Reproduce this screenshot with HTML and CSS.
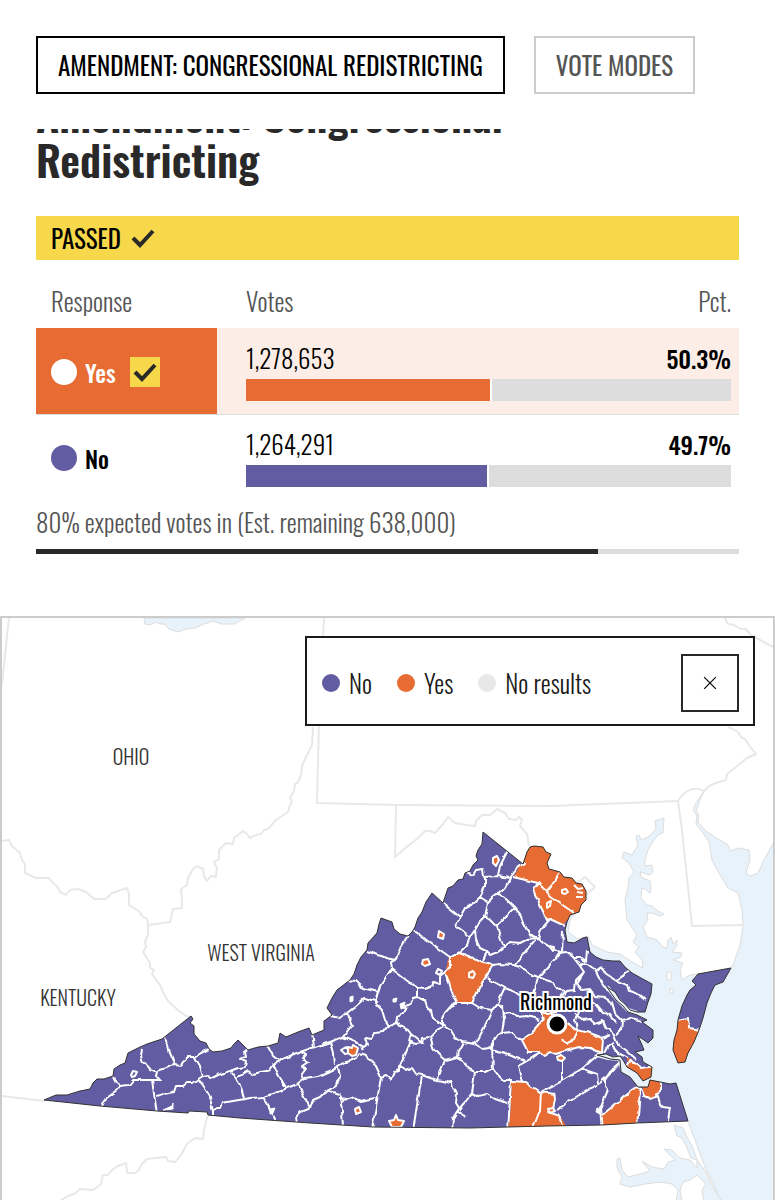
FILE: index.html
```html
<!DOCTYPE html>
<html lang="en">
<head>
  <meta charset="UTF-8">
  <meta name="viewport" content="width=device-width, initial-scale=1">
  <title>Amendment: Congressional Redistricting</title>
  <link rel="stylesheet" href="styles.css">
</head>
<body>
  <nav class="tabs">
    <button type="button" class="tab active">AMENDMENT: CONGRESSIONAL REDISTRICTING</button>
    <button type="button" class="tab">VOTE MODES</button>
  </nav>

  <main>
    <section class="results">
      <div class="title-wrap">
        <h1>Amendment: Congressional<br>Redistricting</h1>
      </div>

      <p class="passed">PASSED
        <svg class="check" viewBox="0 0 24 20"><path d="M2 10l7 7L22 3"/></svg>
      </p>

      <table>
        <thead>
          <tr>
            <th class="response">Response</th>
            <th>Votes</th>
            <th class="pct">Pct.</th>
          </tr>
        </thead>
        <tbody class="winner">
          <tr>
            <th rowspan="2" class="response">
              <div class="choice">
                <span class="dot"></span>Yes
                <span class="badge"><svg class="check" viewBox="0 0 24 20"><path d="M2 10l7 7L22 3"/></svg></span>
              </div>
            </th>
            <td>1,278,653</td>
            <td class="pct">50.3%</td>
          </tr>
          <tr>
            <td colspan="2" class="bar-cell"><div class="bar"><div class="fill yes" style="width: 50.3%"></div></div></td>
          </tr>
        </tbody>
        <tbody>
          <tr>
            <th rowspan="2" class="response">
              <div class="choice"><span class="dot no"></span>No</div>
            </th>
            <td>1,264,291</td>
            <td class="pct">49.7%</td>
          </tr>
          <tr>
            <td colspan="2" class="bar-cell"><div class="bar"><div class="fill no" style="width: 49.7%"></div></div></td>
          </tr>
        </tbody>
      </table>

      <p class="expected">80% expected votes in (Est. remaining 638,000)</p>
      <div class="progress"><div class="progress-fill" style="width: 80%"></div></div>
    </section>

    <section class="map">
      <svg class="map-svg" viewBox="2 618 771 582">
        <defs>
          <path id="virginia" d="M44 1100L56 1095 67 1095 80 1091 90 1089 93 1083 97 1079 104 1079 113 1076 114 1069 120 1065 125 1063 128 1053 138 1048 147 1044 162 1039 191 1016 193 1019 190 1023 194 1026 194 1034 200 1041 206 1043 209 1049 213 1052 222 1051 231 1048 234 1044 238 1040 243 1045 248 1050 258 1047 268 1046 278 1043 280 1033 286 1037 298 1032 309 1028 312 1035 324 1030 324 1021 332 1015 327 1008 332 998 337 990 350 980 354 974 357 965 361 957 367 950 368 943 377 933 379 924 381 918 392 922 394 929 400 934 408 936 412 932 415 927 418 918 422 912 426 902 432 893 443 903 448 888 453 886 458 880 463 879 465 873 470 871 473 865 478 860 476 856 478 850 482 844 483 832 523 864 527 852 530 847 534 846 543 847 546 852 551 854 547 863 549 869 560 872 564 877 572 878 576 883 582 884 586 891 586 900 581 905 579 912 570 915 567 922 565 930 567 942 574 943 583 938 587 937 590 952 596 957 603 960 613 961 620 961 625 967 632 973 641 978 652 984 651 994 648 1002 645 1012 637 1012 630 1010 625 1004 620 1000 615 992 607 987 611 993 616 1000 623 1006 628 1012 637 1015 647 1020 642 1022 653 1030 653 1038 648 1043 644 1040 638 1036 642 1045 644 1050 635 1052 642 1057 643 1062 652 1067 651 1077 643 1081 637 1073 627 1067 623 1060 620 1056 613 1057 606 1054 597 1055 604 1057 610 1059 620 1060 621 1072 630 1077 638 1087 648 1087 650 1080 660 1082 670 1084 676 1083 688 1121 637 1123 602 1125 547 1126 470 1128 373 1127 310 1123 240 1118 208 1115 207 1112 189 1111 188 1113 157 1111 100 1106Z"/>
          <path id="shore" d="M698 974L731 968 723 982 715 985 711 993 707 1003 703 1018 699 1030 694 1042 688 1053 685 1062 678 1063 673 1050 674 1040 677 1030 678 1020 682 1006 687 995 690 990 696 985 692 981Z"/>
          <clipPath id="state"><use href="#virginia"/><use href="#shore"/></clipPath>
          <!-- roughens the county lines so they run like rivers -->
          <filter id="rough" filterUnits="userSpaceOnUse" x="2" y="800" width="771" height="400" color-interpolation-filters="sRGB">
            <feTurbulence type="fractalNoise" baseFrequency="0.14" numOctaves="1" seed="4"/>
            <feDisplacementMap in="SourceGraphic" scale="5" xChannelSelector="R" yChannelSelector="G"/>
          </filter>
        </defs>

        <!-- water -->
        <g class="water">
          <path d="M144 618L145 624 150 625 156 622 160 624 164 624 169 629 178 632 186 629 195 628 204 624 213 621 221 624 234 624 245 618Z"/>
          <path d="M664 818L663 833 658 835 652 843 648 850 645 860 645 866 652 865 653 872 650 875 640 872 641 877 650 881 651 890 650 893 645 889 642 888 641 898 647 905 652 906 658 911 664 914 660 916 652 913 647 913 648 920 643 927 647 937 657 940 663 947 667 948 668 940 671 937 673 944 677 940 677 946 672 952 682 953 681 957 673 960 683 963 680 970 682 980 690 975 698 974 731 968 733 965 740 945 743 927 742 910 738 893 728 888 720 875 712 860 709 842 703 833 696 824 697 816 693 810 696 803 704 791 700 800 696 811 699 815 698 822 705 830 716 838 727 844 731 851 738 848 749 850 750 860 746 873 750 876 758 873 765 858 775 840 775 1202 721 1202 715 1187 705 1167 695 1140 688 1121 640 1100 600 1050 580 960 563 935 565 920 578 911 570 920 568 932 578 939 588 936 592 945 607 952 620 954 632 962 643 968 642 960 635 952 639 947 633 942 637 935 627 920 625 900 628 888 629 878 634 872 629 863 622 858 624 852 632 855 638 845 636 836 639 835 641 840 648 837 656 829 655 821Z"/>
          <path d="M674 1125L683 1128 686 1135 693 1148 697 1160 706 1172 712 1185 722 1202 704 1202 702 1190 706 1184 697 1175 690 1180 683 1182 680 1190 682 1202 676 1202 678 1190 672 1184 660 1182 645 1184 630 1187 620 1184 622 1177 617 1168 617 1159 620 1158 622 1170 628 1177 640 1174 650 1171 642 1161 652 1167 664 1169 668 1162 675 1160 664 1149 672 1150 680 1158 690 1160 697 1168 697 1160 691 1158 687 1148 682 1138 677 1136Z"/>
        </g>
        <path class="islet" d="M667 972h4v8h-4zM670 989h3v4h-3z"/>

        <!-- neighbouring states -->
        <g class="borders">
          <path d="M9 617L2 684"/>
          <path d="M2 841L9 840 12 846 20 853 22 860 25 864 25 873 36 878 49 878 52 882 57 886 60 892 66 895 70 890 78 889 86 892 94 899 106 899 112 893 118 891 127 888 129 894 129 905 140 912 142 916 147 919 148 925 148 935 145 942 146 947 143 952 150 963 150 968 154 970 152 974 160 985 164 994 168 1001 178 1010 186 1016 191 1017"/>
          <path d="M148 925L170 922 173 909 182 908 182 900 181 889 187 885 188 878 193 869 197 866 203 869 204 876 207 881 211 876 216 877 217 868 214 862 219 859 219 850 226 843 233 844 234 838 243 831 247 834 250 838 256 835 261 834 264 830 268 829 276 820 288 812 290 805 292 802 290 798 294 791 295 784 298 782 301 775 302 766 306 757 312 745 313 727"/>
          <path d="M324 617L323 640M319 720L317 803 400 805 550 806 678 801C685 789 696 786 704 791L709 786 716 783 726 780 727 774 736 767 747 758 756 754 749 745 745 739 741 737 738 732 733 729 728 727"/>
          <path d="M725 618L728 624 734 625 741 629 746 629 751 635M751 635L773 647"/>
          <path d="M396 806L395 857 409 845 417 839 425 831 430 831 435 833 443 824 448 817 455 823 466 825 475 826 476 821 482 815 490 815 497 809 505 813 509 819 516 820 519 817 522 820 520 826 527 834 529 846"/>
          <path d="M678 801L682 830 692 926 742 925M577 883L585 877 595 887 585 896"/>
          <path d="M2 1096L44 1101M208 1114L204 1130 203 1139 195 1138 187 1144 181 1155 175 1162 168 1161 166 1157 155 1158 147 1159 142 1164 138 1171 135 1173 127 1173 126 1163 118 1166 112 1170 108 1175 103 1175 101 1184 93 1190 80 1189 76 1193 66 1197 60 1201"/>
        </g>

        <use class="land" href="#virginia"/>
        <use class="land" href="#shore"/>

        <g clip-path="url(#state)">
          <g filter="url(#rough)">
            <!-- counties voting yes -->
            <g class="yes-area">
              <path d="M523 864L526 838 560 845 561 873 547 892 538 883 513 877Z"/>
              <path d="M561 873L565 862 598 878 594 914 572 920 572 914 557 902 547 892Z"/>
              <path d="M538 883L547 892 557 902 575 912 563 926 550 919 547 921 533 890Z"/>
              <path d="M449 957L458 953 493 965 472 1003 458 1004 452 988 445 973Z"/>
              <path d="M522 1040L530 1034 540 1023 543 1020 541 1012 553 1013 560 1020 567 1023 577 1030 590 1033 603 1038 602 1053 590 1048 580 1047 569 1050 562 1052 556 1054 551 1052 545 1056 540 1052 528 1052Z"/>
              <path d="M512 1081L525 1082 532 1087 540 1092 556 1094 553 1108 548 1112 557 1115 566 1124 565 1135H509Z"/>
              <path d="M602 1115L612 1107 625 1096 637 1087 640 1091 637 1130 602 1133Z"/>
              <path d="M625 1056L635 1062 642 1068 657 1066 656 1082 643 1085 637 1076 629 1070Z"/>
              <path d="M649 1075L661 1078 661 1092 655 1095 653 1099 646 1097 643 1092 643 1085Z"/>
              <path d="M670 1018L688 1020 689 1028 710 1030 695 1070H665Z"/>
            </g>

            <!-- county lines -->
            <g class="counties">
              <path d="M142 1049L141 1056 143 1062 150 1070 155 1072 158 1073 157 1077 160 1080 145 1080 133 1080 129 1085 120 1086 117 1090 107 1097 101 1109M113 1077L116 1083 120 1086M163 1036L168 1044 170 1053 173 1060 174 1066M157 1073L160 1069 167 1067 170 1066 175 1065 180 1066 183 1061 188 1057 195 1057 201 1053 209 1049M195 1057L200 1066 203 1077M152 1080L157 1114M157 1097L165 1094 173 1092 175 1086 183 1086 187 1083 192 1083 203 1076 208 1075 210 1079 218 1075 230 1071 238 1068 245 1067 246 1062 241 1059 245 1057 244 1052 249 1048M199 1080L205 1088 210 1097 213 1112 213 1118M213 1112L216 1108 220 1108 222 1103 233 1101 245 1099 250 1098 263 1097M232 1072L240 1085 244 1098M237 1077L241 1075 248 1071 253 1074 270 1070 275 1063 285 1058 300 1052 315 1047 330 1042 343 1037 353 1041 361 1045 363 1050"/>
              <path d="M267 1045L273 1056 278 1060M312 1032L314 1047M273 1063L279 1076 287 1089M263 1097L275 1093 287 1088 297 1084 305 1078 318 1076 327 1072 335 1069 338 1066 345 1062 350 1061 357 1058 360 1053M301 1052L306 1055 302 1059 308 1062 302 1066 305 1070 302 1074 305 1079M330 1042L333 1053 334 1066M263 1097L270 1109 277 1123M298 1084L304 1096 310 1108 300 1112 296 1116 297 1125M310 1108L313 1100 320 1097 324 1093 330 1090 336 1086 337 1081 340 1077 338 1067M330 1091L340 1094 343 1100 352 1097 360 1101 375 1098M340 1097L342 1110 343 1128M381 1077L372 1130M360 1053L366 1055 368 1060 375 1064 381 1077 386 1075 391 1079 394 1072 399 1071 399 1066 405 1070 412 1068 416 1074 422 1075 430 1078 438 1080M422 1075L413 1130M362 1047L367 1045 365 1038 372 1039 375 1033 383 1032 388 1026 397 1022 398 1018 403 1012 406 1006 411 1003 413 998 418 997 421 999 425 999 427 1008 431 1010 433 1018 437 1021 442 1025"/>
              <path d="M330 1015L340 1017 347 1013 356 1006 365 998 378 1002M347 1013L352 1025 343 1037M347 980L356 981 363 988 378 992 380 986 386 977 392 970 391 962 395 960 380 956 367 951M378 992L375 1003 382 1010 385 1020 390 1027M395 960L400 949 409 935M392 969L405 979 418 988 418 997M412 929L433 945 450 957M418 988L424 989 432 986 434 982 440 984 440 977 445 973M397 1020L400 1026 408 1030 411 1034 409 1041 415 1044 422 1043 423 1038 430 1037 437 1030 442 1027 442 1020 445 1013 451 1006 458 1003M411 1041L404 1057 397 1072M430 1037L434 1050 440 1056 445 1060 457 1057 458 1051 463 1042M411 1034L417 1039 422 1043"/>
              <path d="M440 901L460 917 456 927 470 937 477 927M465 872L473 875 476 870 483 869 484 877 498 876 510 878 516 870 525 862M508 850L500 866 498 875M485 877L485 887 480 897 488 902 493 897 498 893 505 888 510 878M480 897L473 904 465 908 460 917M488 902L485 917 478 924 475 930 476 940 480 948 486 951 490 955 498 952 504 947M485 917L490 920 497 927 500 936 504 947M498 893L507 900 515 908 497 926M515 908L520 914 523 922 530 935 538 938 540 932 544 926 550 919M513 877L538 883 533 890 547 920 550 919 565 926M538 883L547 892 551 897 557 901 564 906 574 913M547 892L554 882 562 870M504 947L510 942 520 943 528 939 538 938 543 943 550 947 560 953 567 952 573 957 580 957 587 963M563 932L562 952M470 937L467 945 460 952 450 957 450 966 445 973M458 953L493 965 482 983 472 1003M487 952L483 960M493 965L500 964 513 965 520 967 528 973 538 977 546 980 552 982 556 989 566 991M535 940L525 952 515 965M560 953L548 967 538 978 532 1000M487 978L496 983 505 988 515 992 523 998M505 988L498 1003M445 973L449 982 452 992 458 1004"/>
              <path d="M458 1003L472 1003 480 1008 492 1010 484 1028 475 1045M498 1003L492 1010M442 1025L450 1030 455 1038 463 1042 475 1044 483 1049 490 1048 493 1042 498 1034 502 1033M503 1005L504 1020 502 1033 513 1032 517 1038 523 1040M498 1003L505 1013 511 1012 517 1017 527 1016 540 1020M495 1037L492 1047 493 1070M492 1050L527 1061 518 1066 522 1082M527 1061L535 1056 540 1053M562 1056L562 1080M457 1057L463 1060 467 1068 475 1072 485 1072 493 1068 498 1075 503 1080 512 1080M445 1060L441 1070 438 1080 450 1083 451 1081 453 1088 457 1093 456 1103 459 1108 458 1112 466 1117M475 1072L472 1093 465 1102 458 1110 453 1118 452 1131M472 1093L478 1096 487 1094 495 1099 508 1103M511 1080L508 1131M512 1081L525 1082 532 1087 540 1092 556 1094M541 1092L540 1110 532 1131M556 1094L553 1108 548 1112 557 1115 566 1130M541 1092L560 1082 583 1068 592 1060 600 1053M557 1110L570 1101 600 1083 612 1072 620 1063M583 1068L588 1071 597 1074 598 1083"/>
              <path d="M522 1040L530 1034 540 1023 543 1020 541 1012 548 1014 556 1012M567 1023L577 1030 590 1033 603 1038 602 1053 590 1048 580 1047 569 1050 562 1052 556 1054 551 1052 545 1056 540 1052 528 1052 522 1040M577 1030L572 1040 567 1045 562 1038M532 1000L540 1003 552 1002 561 997 566 991M573 957L580 966 584 972 576 980 575 990 566 991M580 960L595 970 600 980 608 991M587 950L586 962 580 966M602 967L606 974 615 980 627 985 629 991 638 994 645 1000M602 967L596 972M615 980L624 976 630 969M584 972L577 983 582 990 590 989 595 997 605 998 612 1002 615 1013 622 1020 621 1030 616 1035M590 989L588 998 596 1004 603 1012 610 1015 616 1022M575 1014L583 1020 590 1019 595 1024 603 1021 606 1028 613 1033 618 1045 626 1050 637 1060M622 1020L632 1018 641 1021M603 1038L609 1035M604 1053L608 1046 614 1043M612 1046L618 1053 628 1058M577 1030L575 1020 580 1010M605 1080L605 1086 608 1090 604 1099 600 1108 602 1130M602 1115L612 1107 625 1096 637 1087M640 1090L637 1128M637 1087L643 1090 644 1096 651 1099 658 1096 660 1104 663 1107 670 1108 667 1125M661 1080L661 1092 655 1095M605 1080L610 1072 619 1064M678 1020L688 1018 689 1028 702 1030M627 1065L630 1060 642 1068 655 1066"/>
            </g>
          </g>
        </g>

        <!-- tidal rivers -->
        <path class="river" d="M607 987L616 998 628 1010 637 1013M597 1055L608 1058 620 1059 622 1069 632 1076 641 1084"/>

        <!-- independent cities -->
        <g class="cities">
          <path d="M493 858l4-2 2 4-3 6-3-3z"/>
          <path d="M439 931l5 3-1 5-5-2z"/>
          <path d="M423 960l5-1 2 5-5 2-3-2z"/>
          <path class="no-area" d="M341 1050l5-3 4 6-5 1z"/>
          <path d="M348 1047l4 1 1-3 5 3-2 7-4 1-4-3z"/>
          <path d="M389 1121l5-1 2-5 2 5 6 1-3 6h-9z"/>
          <path d="M355 1109l4-2 2 5-5 2z"/>
          <path d="M469 973l4-2 2 3-2 4-4-1z"/>
          <path d="M562 890l4-1 2 3-3 2-3-1z"/>
          <path d="M547 903l4-2-1 5-3 2z"/>
          <path d="M574 885l4 4 5-1M577 892l6 1M576 897h7"/>
          <path d="M549 946l5 1-1 4z"/>
          <path d="M557 1057l4-2 4 3-3 3-4-1z"/>
          <path d="M548 1109l5-1 2 3-5 2z"/>
          <path class="no-area" d="M131 1075l2-4 4 1-2 4-3 1z"/>
          <path class="no-area" d="M436 973l2-4 4 2-2 4z"/>
          <path class="solid" d="M350 997l3-1v5l-3 1zM393 999l4-1-1 4-3 0zM400 1004l5-2-1 6-3 1zM163 1110l9-4 1-3v6zM270 1109l5-1-2 5-3 1zM597 1108l4 1-1 5-4-2z"/>
        </g>

        <use class="outline" href="#virginia"/>
        <use class="outline" href="#shore"/>

        <text class="state-name" x="131" y="765">OHIO</text>
        <text class="state-name" x="261" y="961">WEST VIRGINIA</text>
        <text class="state-name" x="78" y="1006">KENTUCKY</text>
        <circle class="capital" cx="557" cy="1024" r="9"/>
        <text class="city-name" x="556" y="1010">Richmond</text>
      </svg>

      <div class="legend">
        <span class="key"><i class="key-dot no"></i>No</span>
        <span class="key"><i class="key-dot yes"></i>Yes</span>
        <span class="key"><i class="key-dot"></i>No results</span>
        <button type="button" class="close" aria-label="Close legend">
          <svg viewBox="0 0 12 12"><path d="M1 1l10 10M11 1L1 11"/></svg>
        </button>
      </div>
    </section>
  </main>
</body>
</html>
```
FILE: styles.css
```css
* {
  box-sizing: border-box;
}

body {
  margin: 0;
  background-color: #fff;
  color: #000;
  font-family: Oswald, "Liberation Sans Narrow", "Liberation Sans", sans-serif;
  font-size: 25px;
  font-weight: 300;
  line-height: 32px;
}

button {
  font-family: inherit;
  background-color: #fff;
  cursor: pointer;
}

.tabs {
  display: flex;
  gap: 29px;
  padding: 36px 36px 35px;
}

.tab {
  height: 58px;
  padding: 0 20px 2px;
  border: 2px solid #ccc;
  color: #555;
  font-size: 25px;
  font-weight: 400;
  white-space: nowrap;
}

.tab.active {
  border-color: #000;
  color: #000;
}

.results {
  padding: 0 36px;
}

/* the title is scrolled part way under the tabs */
.title-wrap {
  display: flex;
  align-items: flex-end;
  height: 60px;
  padding-bottom: 8px;
  overflow: hidden;
}

h1 {
  margin: 0;
  color: #292929;
  font-size: 43px;
  font-weight: 600;
  line-height: 45px;
  white-space: nowrap;
}

.passed {
  display: flex;
  align-items: center;
  gap: 10px;
  height: 44px;
  margin: 27px 0 0;
  padding: 0 15px;
  background-color: #f7d84a;
  font-weight: 400;
}

.check {
  width: 24px;
  height: 20px;
  fill: none;
  stroke: #292929;
  stroke-width: 4;
}

table {
  width: 100%;
  margin-top: 25px;
  border-collapse: collapse;
}

th,
td {
  padding: 0;
  font-weight: 300;
  text-align: left;
}

td,
thead th {
  padding-left: 29px;
}

thead th {
  height: 43px;
  padding-bottom: 11px;
  color: #555;
}

th.response {
  width: 181px;
  padding-left: 15px;
}

tbody td {
  height: 51px;
  padding-top: 8px;
}

tbody .pct {
  font-size: 24px;
  font-weight: 500;
}

thead .pct,
tbody .pct {
  padding-right: 8px;
  text-align: right;
}

tbody .bar-cell {
  height: 35px;
  padding: 0 8px 0 29px;
  vertical-align: top;
}

.winner {
  background-color: #fcede6;
  border-bottom: 1px solid #ddd;
}

.winner .response {
  background-color: #e66c33;
  color: #fff;
}

.choice {
  display: flex;
  align-items: center;
  gap: 8px;
  padding-top: 2px;
  font-size: 24px;
  font-weight: 500;
}

.dot {
  width: 26px;
  height: 26px;
  border-radius: 50%;
  background-color: #fff;
}

.badge {
  display: flex;
  align-items: center;
  justify-content: center;
  width: 30px;
  height: 30px;
  margin-left: 6px;
  background-color: #f7d84a;
}

.bar {
  height: 22px;
  background-color: #ddd;
}

.fill {
  box-sizing: content-box;
  height: 100%;
  border-right: 2px solid #fff;
  background-clip: padding-box;
}

.yes {
  background-color: #e66c33;
}

.no {
  background-color: #625da3;
}

.expected {
  margin: 6px 0 11px;
  color: #555;
}

.progress {
  height: 5px;
  background-color: #ddd;
}

.progress-fill {
  height: 100%;
  background-color: #292929;
}

.map {
  position: relative;
  margin-top: 62px;
  border: 2px solid #ccc;
  border-bottom: none;
}

.map-svg {
  display: block;
  width: 100%;
}

.map-svg path,
.map-svg use {
  stroke-linejoin: round;
}

.water path {
  fill: #e8f2fb;
  stroke: #ddd;
  stroke-width: 1;
}

.islet {
  fill: #fff;
  stroke: #ddd;
  stroke-width: 1;
}

.borders path {
  fill: none;
  stroke: #e8e8e8;
  stroke-width: 2;
}

.land {
  fill: #625da3;
}

.yes-area path {
  fill: #e66c33;
}

.counties path {
  fill: none;
  stroke: #fff;
  stroke-width: 2;
}

.river {
  fill: none;
  stroke: #e8f2fb;
  stroke-width: 4;
}

.cities path {
  fill: #e66c33;
  stroke: #fff;
  stroke-width: 2;
}

.cities .no-area {
  fill: #625da3;
}

.cities .solid {
  fill: #fff;
  stroke-width: 1;
}

.outline {
  fill: none;
  stroke: #333;
  stroke-width: 1;
}

.state-name {
  fill: #333;
  font-size: 20px;
  text-anchor: middle;
}

.city-name {
  fill: #000;
  stroke: #fff;
  stroke-width: 4;
  paint-order: stroke;
  font-size: 20px;
  font-weight: 400;
  text-anchor: middle;
}

.capital {
  fill: #000;
  stroke: #fff;
  stroke-width: 3;
}

.legend {
  position: absolute;
  top: 18px;
  right: 18px;
  display: flex;
  align-items: center;
  gap: 25px;
  width: 450px;
  height: 90px;
  padding: 4px 14px 0 15px;
  border: 2px solid #1a1a1a;
  background-color: #fff;
  color: #1a1a1a;
}

.key {
  display: flex;
  align-items: center;
  gap: 9px;
}

.key-dot {
  width: 18px;
  height: 18px;
  border-radius: 50%;
}

.key-dot:not(.yes):not(.no) {
  background-color: #e8e8e8;
}

.close {
  display: flex;
  align-items: center;
  justify-content: center;
  width: 58px;
  height: 58px;
  margin-left: auto;
  padding: 0;
  border: 2px solid #292929;
}

.close svg {
  width: 14px;
  height: 14px;
  fill: none;
  stroke: #000;
  stroke-width: 1;
}
```
